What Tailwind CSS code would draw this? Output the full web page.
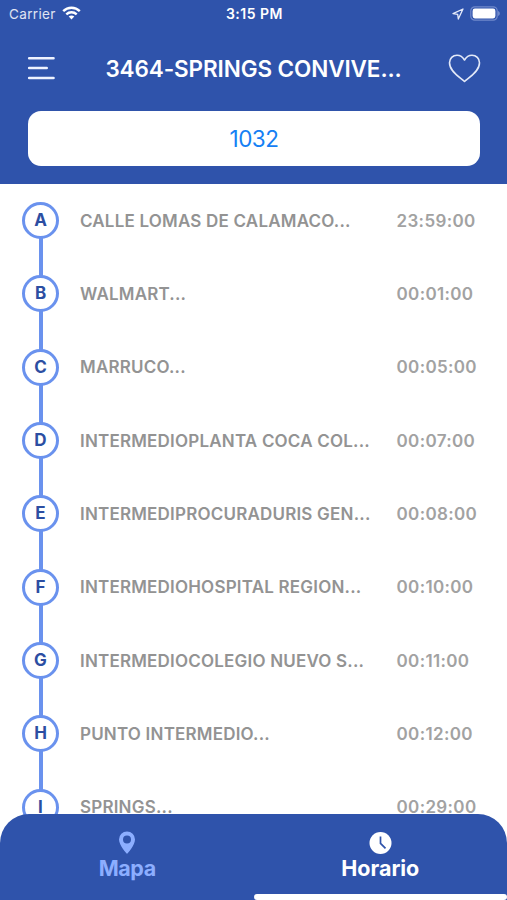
<!DOCTYPE html>
<html lang="es">
<head>
<meta charset="utf-8">
<title>Horario</title>
<script src="https://cdn.jsdelivr.net/npm/@tailwindcss/browser@4"></script>
</head>
<body class="bg-white">
<div class="relative flex h-[900px] w-[507px] flex-col overflow-hidden bg-white font-['Inter',sans-serif]">
  <header class="h-[184px] shrink-0 bg-[#2f53ab] text-white">
    <div class="grid h-7 grid-cols-3 items-center pr-[7px] pl-[9px]">
      <div class="flex items-center gap-[6px] text-[13.5px] leading-none tracking-[0.35px] text-white/85">
        <span class="mt-[1px]">Carrier</span>
        <svg class="-mt-[2px] h-[14px] w-[19px]" viewBox="0 0 19 14" fill="none" stroke="white" stroke-width="2.4"><path d="M1.200 5.200C5.800.6 13.200.6 17.800 5.200"/><path d="M4.300 8.300c3-2.800 7.400-2.800 10.400 0"/><path d="M9.500 13.400 6.700 10.600c1.600-1.400 4-1.400 5.600 0z" fill="white" stroke="none"/></svg>
      </div>
      <div class="text-center text-[14px] leading-none font-semibold tracking-[0.5px]">3:15 PM</div>
      <div class="-mt-[1px] flex items-center justify-end gap-[6px]">
        <svg class="h-3 w-3" viewBox="0 0 12 12" fill="none" stroke="#e6ebfa" stroke-width="1.300" stroke-linejoin="round"><path d="M11 1 1 5.600l4.700.7.6 4.700z"/></svg>
        <svg class="h-[15px] w-[30px]" viewBox="0 0 30 15"><rect x=".8" y=".8" width="26.400" height="13.400" rx="4" fill="none" stroke="#7089cb" stroke-width="1.200"/><rect x="2.600" y="2.600" width="22.800" height="9.800" rx="2.300" fill="white"/><path d="M28.200 5c2 .8 2 4.200 0 5z" fill="#8299d3"/></svg>
      </div>
    </div>
    <div class="flex h-[81px] items-center justify-between pr-[26px] pl-[27px]">
      <svg class="-mt-[1px] h-[26px] w-7" viewBox="0 0 28 26" stroke="#eef2ff" stroke-width="2.600" stroke-linecap="round"><path d="M2.200 3.200h24.300M2.200 13h17.500M2.200 23h24.300"/></svg>
      <h1 class="mt-[1px] ml-[4px] text-[22.5px] leading-none font-semibold tracking-[-0.1px] whitespace-nowrap">3464-SPRINGS CONVIVE...</h1>
      <svg class="h-[29px] w-[33px]" viewBox="0 0 33 29" fill="none" stroke="#e3e9f8" stroke-width="1.600" stroke-linejoin="round"><path d="M16.500 27.500C13 24 1.500 18 1.500 8.800 1.500 4.500 4.800 1.200 9 1.200c3.400 0 5.800 1.800 7.500 4.800 1.700-3 4.100-4.800 7.500-4.800 4.200 0 7.500 3.300 7.500 7.600C31.500 18 20 24 16.500 27.500z"/></svg>
    </div>
    <div class="mr-[27px] ml-[28px] mt-[2px] flex h-[55px] items-center justify-center rounded-[13px] bg-white text-[22.5px] tracking-[-0.5px] text-[#1580f4]">1032</div>
  </header>

  <main class="relative flex-1 text-[17px] leading-none font-semibold tracking-[0.2px] text-[#939393]">
    <div class="absolute top-[36px] left-[38.5px] h-[600px] w-[4px] bg-[#6a92ee]"></div>
    <ul class="relative">
      <li class="flex h-[73.3px] items-center pl-[22px]"><span class="flex size-[37px] items-center justify-center rounded-full border-[3.5px] border-[#6a92ee] bg-white font-bold tracking-normal text-[#2c4ea2]">A</span><span class="mt-[1.5px] ml-[21px] w-[316.5px]">CALLE LOMAS DE CALAMACO...</span><time class="mt-[1.5px] tracking-[0.35px] text-[#a2a2a2]">23:59:00</time></li>
      <li class="flex h-[73.3px] items-center pl-[22px]"><span class="flex size-[37px] items-center justify-center rounded-full border-[3.5px] border-[#6a92ee] bg-white font-bold tracking-normal text-[#2c4ea2]">B</span><span class="mt-[1.5px] ml-[21px] w-[316.5px]">WALMART...</span><time class="mt-[1.5px] tracking-[0.35px] text-[#a2a2a2]">00:01:00</time></li>
      <li class="flex h-[73.3px] items-center pl-[22px]"><span class="flex size-[37px] items-center justify-center rounded-full border-[3.5px] border-[#6a92ee] bg-white font-bold tracking-normal text-[#2c4ea2]">C</span><span class="mt-[1.5px] ml-[21px] w-[316.5px]">MARRUCO...</span><time class="mt-[1.5px] tracking-[0.35px] text-[#a2a2a2]">00:05:00</time></li>
      <li class="flex h-[73.3px] items-center pl-[22px]"><span class="flex size-[37px] items-center justify-center rounded-full border-[3.5px] border-[#6a92ee] bg-white font-bold tracking-normal text-[#2c4ea2]">D</span><span class="mt-[1.5px] ml-[21px] w-[316.5px]">INTERMEDIOPLANTA COCA COL...</span><time class="mt-[1.5px] tracking-[0.35px] text-[#a2a2a2]">00:07:00</time></li>
      <li class="flex h-[73.3px] items-center pl-[22px]"><span class="flex size-[37px] items-center justify-center rounded-full border-[3.5px] border-[#6a92ee] bg-white font-bold tracking-normal text-[#2c4ea2]">E</span><span class="mt-[1.5px] ml-[21px] w-[316.5px]">INTERMEDIPROCURADURIS GEN...</span><time class="mt-[1.5px] tracking-[0.35px] text-[#a2a2a2]">00:08:00</time></li>
      <li class="flex h-[73.3px] items-center pl-[22px]"><span class="flex size-[37px] items-center justify-center rounded-full border-[3.5px] border-[#6a92ee] bg-white font-bold tracking-normal text-[#2c4ea2]">F</span><span class="mt-[1.5px] ml-[21px] w-[316.5px]">INTERMEDIOHOSPITAL REGION...</span><time class="mt-[1.5px] tracking-[0.35px] text-[#a2a2a2]">00:10:00</time></li>
      <li class="flex h-[73.3px] items-center pl-[22px]"><span class="flex size-[37px] items-center justify-center rounded-full border-[3.5px] border-[#6a92ee] bg-white font-bold tracking-normal text-[#2c4ea2]">G</span><span class="mt-[1.5px] ml-[21px] w-[316.5px]">INTERMEDIOCOLEGIO NUEVO S...</span><time class="mt-[1.5px] tracking-[0.35px] text-[#a2a2a2]">00:11:00</time></li>
      <li class="flex h-[73.3px] items-center pl-[22px]"><span class="flex size-[37px] items-center justify-center rounded-full border-[3.5px] border-[#6a92ee] bg-white font-bold tracking-normal text-[#2c4ea2]">H</span><span class="mt-[1.5px] ml-[21px] w-[316.5px]">PUNTO INTERMEDIO...</span><time class="mt-[1.5px] tracking-[0.35px] text-[#a2a2a2]">00:12:00</time></li>
      <li class="flex h-[73.3px] items-center pl-[22px]"><span class="flex size-[37px] items-center justify-center rounded-full border-[3.5px] border-[#6a92ee] bg-white font-bold tracking-normal text-[#2c4ea2]">I</span><span class="mt-[1.5px] ml-[21px] w-[316.5px]">SPRINGS...</span><time class="mt-[1.5px] tracking-[0.35px] text-[#a2a2a2]">00:29:00</time></li>
    </ul>
  </main>

  <nav class="absolute inset-x-0 bottom-0 grid h-[86px] grid-cols-2 rounded-t-[29px] bg-[#2f53ab] text-[21.5px] leading-none font-bold">
    <a class="flex flex-col items-center pt-[17px] pl-[1px] text-[#8caeff]">
      <svg class="h-[23px] w-4" viewBox="0 0 16 23"><path fill="currentColor" fill-rule="evenodd" d="M8 .5a8 8 0 0 0-8 8C0 14.500 8 23 8 23s8-8.500 8-14.500a8 8 0 0 0-8-8zm0 4a4 4 0 1 1 0 8 4 4 0 0 1 0-8z"/></svg>
      <span class="mt-[4px] tracking-[-0.4px]">Mapa</span>
    </a>
    <a class="flex flex-col items-center pt-[17px] text-white">
      <svg class="h-[23px] w-[23px]" viewBox="0 0 23 23"><circle cx="11.500" cy="12" r="11" fill="white"/><path d="M11.500 5.500V12.300l5 5" fill="none" stroke="#2f53ab" stroke-width="1.700"/></svg>
      <span class="mt-[4px]">Horario</span>
    </a>
    <div class="absolute right-0 bottom-0 h-[6px] w-[253px] rounded-[3px] bg-white"></div>
  </nav>
</div>
</body>
</html>
